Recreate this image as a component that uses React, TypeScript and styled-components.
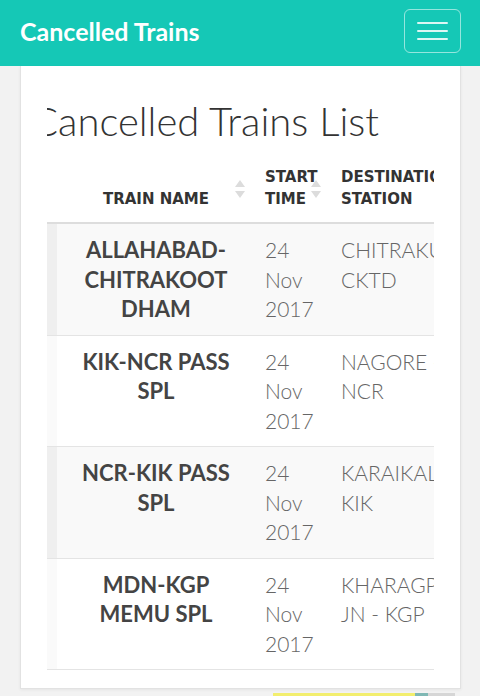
import { useLayoutEffect, useRef } from "react";
import styled, { createGlobalStyle } from "styled-components";

const GlobalStyle = createGlobalStyle`
  body {
    margin: 0;
    background: #f2f2f2;
    font-family: Lato, "Open Sans", sans-serif;
  }
`;

const Navbar = styled.nav`
  height: 66px;
  display: flex;
  align-items: center;
  justify-content: space-between;
  padding: 0 19px 4px 20px;
  box-sizing: border-box;
  background: #15c8b6;
`;

const Brand = styled.a`
  color: #fff;
  font-family: Lato, sans-serif;
  font-weight: 700;
  font-size: 25px;
  text-decoration: none;
`;

const Toggle = styled.button`
  width: 57px;
  height: 44px;
  display: flex;
  flex-direction: column;
  align-items: center;
  justify-content: center;
  gap: 6px;
  background: transparent;
  border: 1.5px solid rgba(255, 255, 255, 0.55);
  border-radius: 6px;
  padding: 0;
`;

const Bar = styled.span`
  display: block;
  width: 31px;
  height: 2px;
  background: rgba(255, 255, 255, 0.85);
  border-radius: 1px;
`;

const Card = styled.div`
  margin: 0 19px 0 20px;
  padding: 33px 26px 18px;
  background: #fff;
  border: 1px solid #e2e2e2;
  border-top: none;
  box-shadow: 0 1px 3px rgba(0, 0, 0, 0.06);
`;

const ScrollArea = styled.div`
  overflow-x: auto;
  scrollbar-width: none;
  &::-webkit-scrollbar {
    display: none;
  }
`;

const Title = styled.h1`
  margin: 0 0 12px;
  padding-left: 64px;
  font-family: Lato, sans-serif;
  font-weight: 300;
  font-size: 40px;
  line-height: 44px;
  color: #333;
  white-space: nowrap;
`;

const Table = styled.table`
  border-collapse: collapse;
  table-layout: fixed;
  width: 670px;
`;

const Th = styled.th<{ $center?: boolean }>`
  position: relative;
  padding: 11px 10px 12px;
  vertical-align: bottom;
  text-align: ${(p) => (p.$center ? "center" : "left")};
  font-family: "DejaVu Sans", sans-serif;
  font-weight: 700;
  font-size: 15px;
  line-height: 22px;
  color: #333;
  border-bottom: 2px solid #ddd;
`;

const SortIcon = styled.svg`
  position: absolute;
  right: 10px;
  top: 50%;
  transform: translateY(-50%);
`;

const Row = styled.tr<{ $odd: boolean }>`
  background: ${(p) => (p.$odd ? "#f9f9f9" : "#fff")};
  border-bottom: 1px solid #e4e4e4;
`;

const NoCell = styled.td<{ $odd: boolean }>`
  padding: 11px 10px;
  vertical-align: top;
  background: ${(p) => (p.$odd ? "#efefef" : "#fafafa")};
  font-size: 21px;
  line-height: 29.5px;
  color: #777;
`;

const NameCell = styled.td`
  padding: 11px 10px;
  vertical-align: top;
  text-align: center;
  font-family: Lato, sans-serif;
  font-weight: 700;
  font-size: 22px;
  line-height: 29.5px;
  color: #444;
`;

const TextCell = styled.td`
  padding: 11px 10px;
  vertical-align: top;
  font-family: Lato, sans-serif;
  font-weight: 300;
  font-size: 21px;
  line-height: 29.5px;
  color: #666;
`;

const AdStrip = styled.div`
  display: flex;
  justify-content: flex-end;
  padding: 4px 25px 0 0;
`;

const AdYellow = styled.div`
  width: 142px;
  height: 30px;
  background: #f2ee6e;
`;

const AdBadge = styled.div`
  width: 40px;
  height: 30px;
  background: linear-gradient(90deg, #7fb8b4 0 13px, #d6d6d6 13px);
`;

const trains = [
  { no: "04197", name: "ALLAHABAD-CHITRAKOOT DHAM", date: "24 Nov 2017", dest: "CHITRAKUT - CKTD", src: "ALLAHABAD JN - ALD" },
  { no: "06095", name: "KIK-NCR PASS SPL", date: "24 Nov 2017", dest: "NAGORE - NCR", src: "KARAIKAL - KIK" },
  { no: "06096", name: "NCR-KIK PASS SPL", date: "24 Nov 2017", dest: "KARAIKAL - KIK", src: "NAGORE - NCR" },
  { no: "68686", name: "MDN-KGP MEMU SPL", date: "24 Nov 2017", dest: "KHARAGPUR JN - KGP", src: "MIDNAPORE - MDN" },
];

const Sort = () => (
  <SortIcon width="10" height="18" viewBox="0 0 10 18">
    <path d="M5 0 L10 7 H0 Z" fill="#dcdcdc" />
    <path d="M0 11 H10 L5 18 Z" fill="#dcdcdc" />
  </SortIcon>
);

export default function App() {
  const scrollRef = useRef<HTMLDivElement>(null);

  useLayoutEffect(() => {
    if (scrollRef.current) scrollRef.current.scrollLeft = 80;
  }, []);

  return (
    <>
      <GlobalStyle />
      <Navbar>
        <Brand href="#">Cancelled Trains</Brand>
        <Toggle aria-label="menu">
          <Bar />
          <Bar />
          <Bar />
        </Toggle>
      </Navbar>
      <Card>
        <ScrollArea ref={scrollRef}>
          <Title>Cancelled Trains List</Title>
          <Table>
            <colgroup>
              <col style={{ width: 90 }} />
              <col style={{ width: 198 }} />
              <col style={{ width: 76 }} />
              <col style={{ width: 156 }} />
              <col style={{ width: 150 }} />
            </colgroup>
            <thead>
              <tr>
                <Th>NO.<Sort /></Th>
                <Th $center>TRAIN NAME<Sort /></Th>
                <Th>START TIME<Sort /></Th>
                <Th>DESTINATION STATION<Sort /></Th>
                <Th>SOURCE STATION<Sort /></Th>
              </tr>
            </thead>
            <tbody>
              {trains.map((t, i) => (
                <Row key={t.no} $odd={i % 2 === 0}>
                  <NoCell $odd={i % 2 === 0}>{t.no}</NoCell>
                  <NameCell>{t.name}</NameCell>
                  <TextCell>{t.date}</TextCell>
                  <TextCell>{t.dest}</TextCell>
                  <TextCell>{t.src}</TextCell>
                </Row>
              ))}
            </tbody>
          </Table>
        </ScrollArea>
      </Card>
      <AdStrip>
        <AdYellow />
        <AdBadge />
      </AdStrip>
    </>
  );
}
